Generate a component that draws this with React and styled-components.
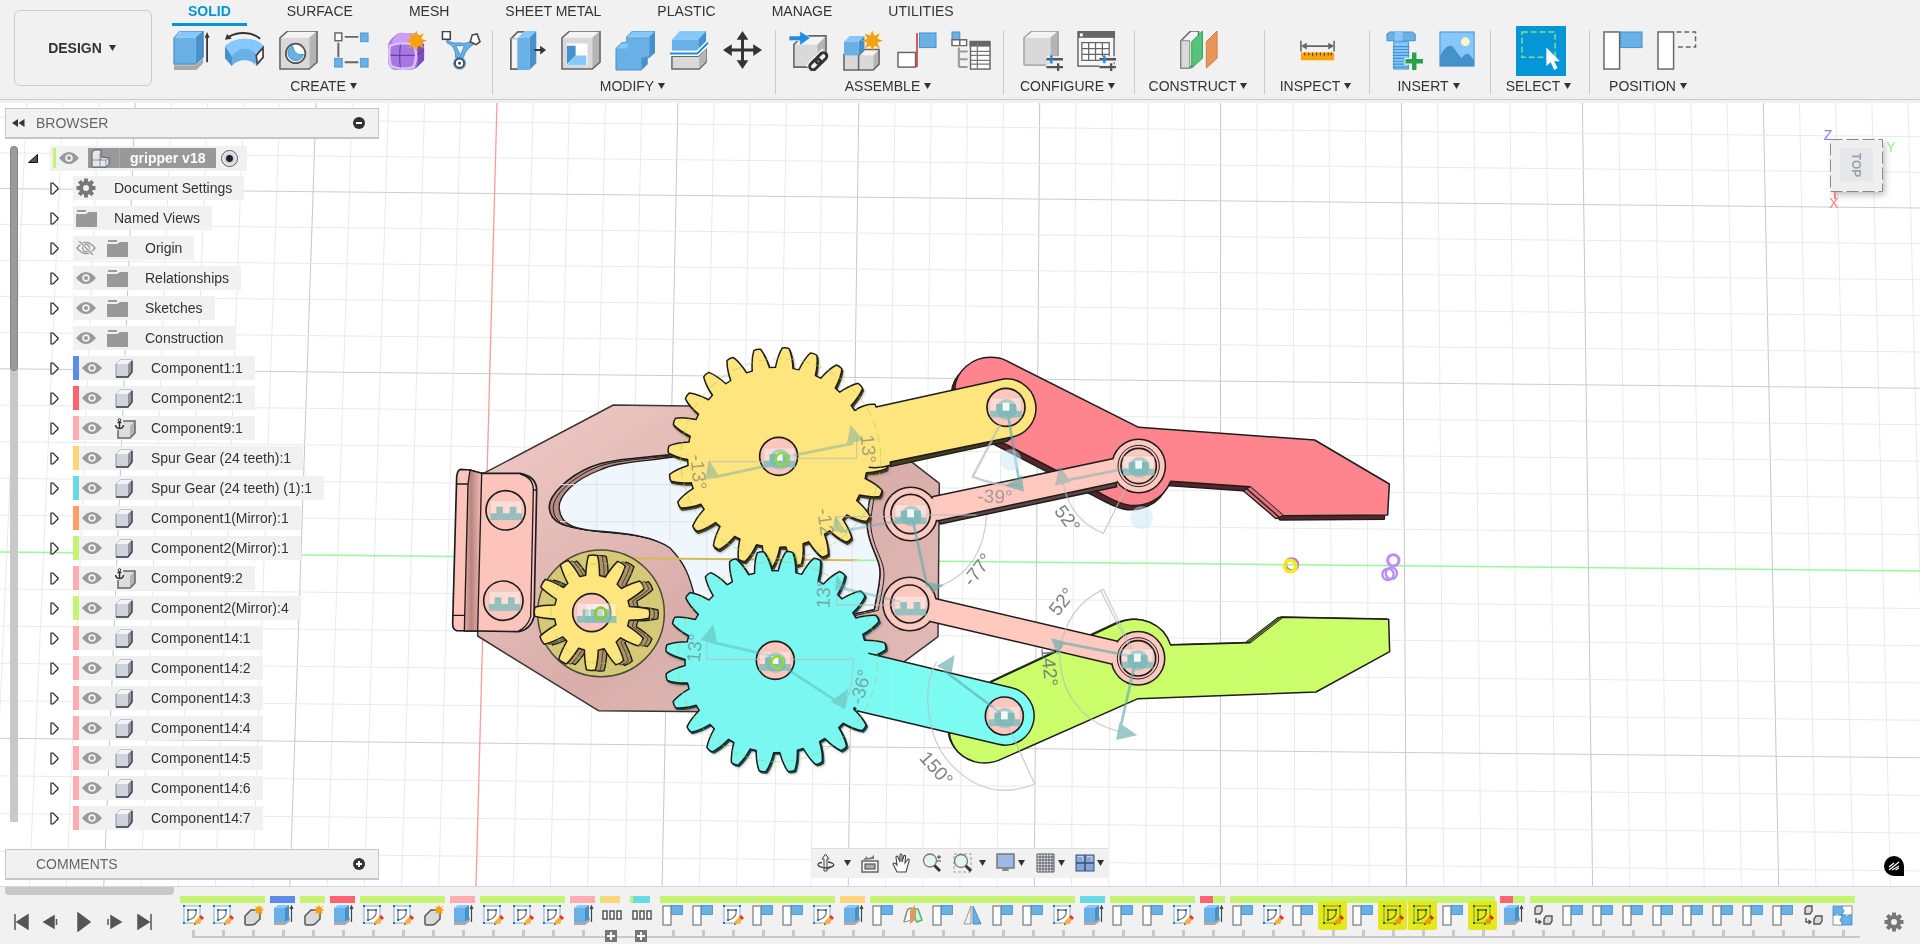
import React from "react";
import styled, { createGlobalStyle } from "styled-components";

const GlobalStyle = createGlobalStyle`
  * { box-sizing: border-box; }
  html, body, #root { height: 100%; }
  body { margin: 0; background: #f1f1f1; font-family: "Liberation Sans", Arial, sans-serif; font-size: 14px; color: #333; }
  button { font: inherit; color: inherit; background: none; border: 0; padding: 0; margin: 0; cursor: pointer; }
  ul { list-style: none; margin: 0; padding: 0; }
  svg { display: block; flex: none; }
`;

/* ---------- page frame ---------- */

const Page = styled.div`
  display: flex;
  flex-direction: column;
  min-height: 100vh;
`;

const Header = styled.header`
  display: flex;
  height: 100px;
  flex: none;
  border-bottom: 1px solid #c9c9c9;
  background: #f1f1f1;
`;

const WorkspaceButton = styled.button`
  display: flex;
  align-items: center;
  justify-content: center;
  gap: 7px;
  width: 138px;
  height: 76px;
  margin: 10px 6px 0 14px;
  padding-right: 2px;
  border: 1px solid #cdcdcd;
  border-radius: 6px;
  font-weight: bold;
`;

const HeaderMain = styled.div`
  display: flex;
  flex-direction: column;
  flex: 1;
  min-width: 0;
`;

const TabBar = styled.nav`
  display: flex;
  gap: 24px;
  padding-left: 14px;
  height: 26px;
`;

const Tab = styled.button`
  height: 26px;
  padding: 0 16px;
  line-height: 23px;
  white-space: nowrap;
  border-bottom: 3px solid ${(p) => (p.$active ? "#0696d7" : "transparent")};
  color: ${(p) => (p.$active ? "#0696d7" : "#333")};
  font-weight: ${(p) => (p.$active ? "bold" : "normal")};
`;

const Ribbon = styled.div`
  display: flex;
`;

const Group = styled.section`
  position: relative;
  display: flex;
  flex-direction: column;
  align-items: center;
  width: ${(p) => p.$w}px;
  flex: none;
  &:not(:last-child)::after {
    content: "";
    position: absolute;
    right: 0;
    top: 4px;
    height: 64px;
    border-right: 1px solid #c9c9c9;
  }
`;

const Tools = styled.div`
  display: flex;
  gap: 4px;
`;

const ToolButton = styled.button`
  display: grid;
  place-items: center;
  width: 50px;
  height: 50px;
  background: ${(p) => (p.$active ? "#0696d7" : "none")};
`;

const GroupLabel = styled.button`
  display: flex;
  align-items: center;
  gap: 4px;
  height: 20px;
  padding-right: 4px;
  white-space: nowrap;
`;

const Viewport = styled.main`
  position: relative;
  flex: 1;
  display: flex;
  margin-top: 3px;
  min-height: 783px;
  background: #fff;
  overflow: hidden;
`;

const Scene = styled.svg`
  position: absolute;
  inset: 0;
  width: 100%;
  height: 100%;
`;

/* ---------- side panels ---------- */

const SidePanel = styled.aside`
  position: relative;
  display: flex;
  flex-direction: column;
  width: 374px;
  margin: 5px 0 6px 5px;
`;

const PanelBar = styled.div`
  display: flex;
  align-items: center;
  height: 31px;
  flex: none;
  padding: 0 13px 0 6px;
  border: 1px solid #c6c6c6;
  border-bottom-width: 2px;
  background: #f1f1f1;
  color: #666;
`;

const BarSlot = styled.button`
  width: 24px;
  height: 20px;
  display: grid;
  align-items: center;
`;

const PanelTitle = styled.h2`
  flex: 1;
  margin: 0;
  font-size: 14px;
  font-weight: normal;
`;

const TreeArea = styled.div`
  display: flex;
  flex: 1;
  padding-left: 5px;
`;

const ScrollTrack = styled.div`
  width: 8px;
  height: 676px;
  margin-top: 7px;
  background: #c8c8c9;
  border-radius: 4px 4px 0 0;
`;

const ScrollThumb = styled.div`
  height: 225px;
  border: 1px solid #858585;
  border-radius: 4px;
  background: #9b9b9b;
`;

const Tree = styled.ul`
  padding: 4px 0 0 32px;
`;

const Row = styled.li`
  display: flex;
  align-items: center;
  height: 30px;
`;

const Twisty = styled.button`
  width: ${(p) => (p.$root ? 22 : 23)}px;
  height: 20px;
  display: grid;
  align-items: center;
  margin-left: ${(p) => (p.$root ? -22 : 0)}px;
`;

const RowBody = styled.div`
  display: flex;
  align-items: center;
  height: ${(p) => (p.$root ? 25 : 24)}px;
  padding: ${(p) => (p.$root ? "0 9px 0 3px" : "0 12px 0 0")};
  background: #f1f1f1;
  white-space: nowrap;
`;

const Swatch = styled.span`
  width: ${(p) => (p.$root ? 3 : 6)}px;
  height: ${(p) => (p.$root ? 20 : 24)}px;
  background: ${(p) => p.$color};
`;

const IconSlot = styled.span`
  display: grid;
  place-items: center start;
  width: ${(p) => p.$w}px;
  padding-left: 3px;
`;

const RootName = styled.span`
  display: flex;
  align-items: center;
  height: 20px;
  margin: 0 5px;
  background: #999;
  color: #fff;
  font-weight: bold;
  span + span { padding: 0 11px 0 10px; line-height: 20px; border-left: 1px solid #a9a9a9; }
`;

const ActiveRadio = styled.input`
  appearance: none;
  width: 17px;
  height: 17px;
  margin: 0;
  border: 1px solid #555;
  border-radius: 50%;
  background: radial-gradient(circle, #222 0 3px, #c9d0da 4px, #f4f6f9 8px);
`;

/* ---------- overlays in the viewport ---------- */

const NavBar = styled.div`
  position: absolute;
  left: 50%;
  bottom: 8px;
  transform: translateX(-50%);
  display: flex;
  align-items: center;
  justify-content: space-between;
  width: 296px;
  height: 30px;
  padding: 0 4px 1px;
  background: #f1f1f1;
  border-top: 1px solid #ddd;
`;

const NavButton = styled.button`
  display: flex;
  align-items: center;
  gap: ${(p) => p.$gap || 2}px;
`;

const Assistant = styled.button`
  position: absolute;
  right: 16px;
  bottom: 10px;
  display: grid;
  place-items: center;
  width: 20px;
  height: 20px;
  border-radius: 10px 10px 0 10px;
  background: #000;
`;

/* ---------- timeline ---------- */

const Footer = styled.footer`
  display: flex;
  flex: none;
  height: 58px;
  position: relative;
  border-top: 1px solid #d6d6d6;
  background: #f1f1f1;
`;

const FooterThumb = styled.div`
  position: absolute;
  left: 5px;
  top: 0;
  width: 169px;
  height: 8px;
  border-radius: 0 0 4px 4px;
  background: #c8c8c8;
`;

const Playback = styled.div`
  display: flex;
  align-items: center;
  width: 180px;
  height: 22px;
  margin-top: 24px;
  padding-left: 5px;
  button { width: 31px; display: grid; place-items: center; }
`;

const Track = styled.ul`
  display: flex;
  flex: 1;
  min-width: 0;
  padding-top: 9px;
`;

const Feature = styled.li`
  position: relative;
  display: flex;
  flex-direction: column;
  width: 30px;
  flex: none;
`;

const FeatureBar = styled.span`
  display: flex;
  width: ${(p) => p.$w}px;
  height: 7px;
  background: ${(p) => p.$color};
`;

const BarLead = styled.span`
  width: ${(p) => p.$w}px;
  background: ${(p) => p.$color};
`;

const FeatureButton = styled.button`
  display: grid;
  place-items: center;
  width: 29px;
  height: 29px;
  margin: -2px 0 0 -2px;
  border-radius: 2px;
  position: relative;
  background: ${(p) => (p.$warn ? "#e6e81f" : "none")};
`;

const FeatureArt = styled.g`
  mix-blend-mode: ${(p) => (p.$warn ? "multiply" : "normal")};
`;

const Tick = styled.span`
  height: 8px;
  border-bottom: 2px solid #c9c9c9;
  margin-left: ${(p) => (p.$first ? 12 : 0)}px;
  width: ${(p) => (p.$first ? 18 : 30)}px;
  &::before {
    content: "";
    display: block;
    width: 3px;
    height: 7px;
    margin-left: ${(p) => (p.$first ? 0 : 12)}px;
    background: #c9c9c9;
  }
`;

const Expand = styled.button`
  position: absolute;
  left: 5px;
  top: 34px;
  width: 12px;
  height: 12px;
`;

const FooterEnd = styled.button`
  width: 53px;
  display: grid;
  place-items: center;
  padding-top: 12px;
`;

/* ---------- icons ---------- */

const F = "#68b0e6", T = "#86c8fc", S = "#4591cb", E = "#3b83bb";
const G = "#d9d9d9", GT = "#f3f3f3", GS = "#b4b4b4", K = "#666";

const Caret = () => (
  <svg width="7" height="6" viewBox="0 0 7 6" aria-hidden="true"><path d="M0 0H7L3.5 6Z" fill="#333" /></svg>
);

const starPoints = (cx, cy, r, r2, n = 8) =>
  Array.from({ length: n * 2 }, (_, i) => {
    const a = (Math.PI * i) / n;
    const q = i % 2 ? r2 : r;
    return `${(cx + q * Math.sin(a)).toFixed(1)},${(cy - q * Math.cos(a)).toFixed(1)}`;
  }).join(" ");
const Star = ({ x, y, r = 10 }) => <polygon points={starPoints(x, y, r, r * 0.5)} fill="#f5a20a" />;

const Block = ({ x, y, w, h, dx = 7, dy = 7, c = [F, T, S], stroke = "none" }) => (
  <g stroke={stroke} strokeWidth="1.5" strokeLinejoin="round">
    <path d={`M${x} ${y + dy}L${x + dx} ${y}H${x + w}L${x + w - dx} ${y + dy}Z`} fill={c[1]} />
    <path d={`M${x + w - dx} ${y + dy}L${x + w} ${y}V${y + h - dy}L${x + w - dx} ${y + h}Z`} fill={c[2]} />
    <path d={`M${x} ${y + dy}H${x + w - dx}V${y + h}H${x}Z`} fill={c[0]} />
  </g>
);
const GREY = [G, GT, GS];
const GreyBlock = ({ x, y, w, h, dx = 7, dy = 7 }) => (
  <g>
    <Block x={x} y={y} w={w} h={h} dx={dx} dy={dy} c={GREY} />
    <path d={`M${x} ${y + dy}L${x + dx} ${y}H${x + w}V${y + h - dy}L${x + w - dx} ${y + h}H${x}Z`} fill="none" stroke={K} strokeWidth="1.6" />
  </g>
);
const Sliders = ({ x, y }) => (
  <g>
    <path d={`M${x} ${y + 4}H${x + 17}M${x} ${y + 12}H${x + 17}M${x + 12} ${y + 8}V${y + 16}`} stroke="#f1f1f1" strokeWidth="6" />
    <path d={`M${x} ${y + 4}H${x + 17}M${x} ${y + 12}H${x + 17}M${x + 12} ${y + 8}V${y + 16}`} stroke="#555" strokeWidth="2.4" />
    <path d={`M${x + 5} ${y}V${y + 8}`} stroke="#1b8fe6" strokeWidth="2.6" />
  </g>
);

const toolIcons = {
  extrude: <g>
    <path d="M3 35H25L33 28V33L26 40H3Z" fill="#a9a9a9" />
    <Block x={3} y={0} w={30} h={34} dx={8} />
    <path d="M3 7L9 0H33V27L25 34H3Z" fill="none" stroke={E} />
    <path d="M37 32V4" stroke="#333" strokeWidth="1.8" /><path d="M34.500 7L37 1L39.500 7Z" fill="#333" />
  </g>,
  revolve: <g>
    <path d="M0 16C9 6 30 5 39 15L33 25L31 35C27 28 13 28 7 36C5 33 1 29 0 26Z" fill={F} />
    <path d="M0 16L7 26V36L0 28Z" fill={S} />
    <path d="M0 16C9 6 30 5 39 15L32 24C26 16 14 16 7 26Z" fill={T} />
    <path d="M39 17V27L33 34L32 25Z" fill="#fff" stroke="#444" strokeWidth="1.8" />
    <path d="M4 6C12 1 27 0 36 8" fill="none" stroke="#333" strokeWidth="2" /><path d="M0 9L2 3L7 8Z" fill="#333" />
  </g>,
  hole: <g><GreyBlock x={1} y={0} w={38} h={39} dx={8} />
    <circle cx="17" cy="23" r="10" fill="#fff" stroke="#555" strokeWidth="1.8" /><path d="M14 15A8 8 0 1 0 25 24C19 25 15 22 14 15Z" fill={F} stroke={S} /></g>,
  pattern: <g>
    <path d="M12 6H26M5.500 12V27M12 32H26" stroke={K} strokeWidth="2" />
    <rect x="2" y="2" width="7" height="8" fill="#fff" stroke={K} strokeWidth="1.5" />
    {[[28, 2], [1.500, 28], [28, 28]].map(([x, y]) => <rect key={x + y * 3} x={x} y={y} width="8" height="9" fill={F} stroke={S} strokeWidth=".8" />)}
  </g>,
  form: <g>
    <path d="M9 4Q12 1 18 2H30Q38 8 38 18V30L30 38Q27 40 20 40H8Q1 38 1 30V16Q1 10 9 4Z" fill="#a878e2" />
    <path d="M9 4Q12 1 18 2H30L28 12H4Z" fill="#c9a0f8" />
    <path d="M31 16L38 13V30L30 38Q33 30 31 16Z" fill="#7d4dbb" />
    <path d="M14 12Q12 26 14 40M1 25H29L38 20" fill="none" stroke="#6b3fa5" strokeWidth="1.2" />
    <path d="M3 15Q12 11 28 14Q32 28 27 37Q14 41 4 36Q1 26 3 15Z" fill="none" stroke="#dcc2fb" strokeWidth="2.500" />
    <Star x={30} y={10} r={11} />
  </g>,
  generative: <g>
    <path d="M6 8C10 12 12 13 18 12C24 13 28 13 32 9L34 13C29 17 25 20 23 27H15C15 20 13 15 6 12Z" fill={F} stroke={S} />
    <path d="M15 15H24L20 25Z" fill="#f1f1f1" stroke={S} />
    <rect x="1.500" y="0.500" width="8" height="8" fill="#fff" stroke="#444" strokeWidth="1.600" />
    <path d="M32 4L37 3L40 11L36 14L30 11Z" fill="#fff" stroke="#444" strokeWidth="1.600" />
    <circle cx="19" cy="33" r="6.500" fill={S} /><circle cx="19" cy="33" r="4.500" fill="#fff" stroke="#444" strokeWidth="1.500" /><circle cx="19" cy="33" r="1.500" fill="#444" />
  </g>,
  presspull: <g>
    <path d="M4 8L11 1H19V33L11 39H4Z" fill={GT} stroke={K} strokeWidth="1.800" />
    <path d="M4 8H11V39" fill="none" stroke={GS} />
    <Block x={11} y={0} w={19} h={40} dx={7} />
    <path d="M28 19.500H35" stroke="#333" strokeWidth="2" /><path d="M34 15L40 19.500L34 24Z" fill="#333" />
  </g>,
  shell: <g><GreyBlock x={1} y={0} w={39} h={39} dx={8} />
    <rect x="6" y="13" width="21" height="22" fill="#fff" stroke="#eee" /><path d="M6 15H15V25L6 34Z" fill={S} /><path d="M15 25H26V35H6Z" fill={T} /></g>,
  combine: <g>
    <Block x={12} y={0} w={29} h={28} dx={6} dy={6} />
    <path d="M1 18L7 12H13V18L20 26H33L27 34V40H1Z" fill={F} /><path d="M1 18L7 12H13V18Z" fill={T} />
    <path d="M27 28L33 26V34L27 40Z" fill={S} /><path d="M1 18L7 12H12V6L18 0H41V22L33 28V34L27 40H1Z" fill="none" stroke={S} />
  </g>,
  split: <g>
    <Block x={3} y={0} w={35} h={20} dx={8} dy={9} />
    <path d="M3 26H30L38 19V32L31 39H3Z" fill={G} stroke={K} strokeWidth="1.500" /><path d="M31 26L38 18V31L31 38Z" fill={GS} />
    <path d="M1 23H29L40 12" fill="none" stroke="#fff" strokeWidth="5" /><path d="M1 23H29L40 12" fill="none" stroke="#1b8fe6" strokeWidth="2" />
  </g>,
  move: <g><path d="M20 6V33M6 19.500H34" stroke="#333" strokeWidth="3" />
    <path d="M20 0L26 9H14ZM20 39L14 30H26ZM0 19.500L9 13.500V25.500ZM40 19.500L31 25.500V13.500Z" fill="#333" /></g>,
  insertComp: <g>
    <GreyBlock x={5} y={5} w={33} h={32} dx={9} dy={9} />
    <path d="M0 5H11V0L22 7L11 15V10H0Z" fill="#1b8fe6" stroke="#f1f1f1" strokeWidth=".8" />
    <g transform="rotate(-45 30 31)" fill="none"><path d="M18 31h24" stroke="#f1f1f1" strokeWidth="13" /><rect x="19" y="27.500" width="13" height="7" rx="3.500" stroke="#333" strokeWidth="3" /><rect x="28" y="27.500" width="13" height="7" rx="3.500" stroke="#333" strokeWidth="3" /></g>
  </g>,
  newComp: <g>
    <GreyBlock x={1} y={19} w={19} h={21} dx={5} dy={5} /><GreyBlock x={16} y={19} w={21} h={21} dx={6} dy={6} />
    <Block x={1} y={5} w={21} h={20} dx={6} dy={6} /><Star x={30} y={10} r={11} />
  </g>,
  joint: <g><rect x="1" y="22" width="18" height="15" fill="#fff" stroke={K} strokeWidth="1.500" /><path d="M20.500 2V37" stroke="#d03030" strokeWidth="1.600" /><rect x="23" y="2" width="17" height="15" fill={F} stroke={S} /></g>,
  table: <g>
    <rect x="1" y="1" width="8" height="8" fill={F} stroke={S} /><path d="M1 9H16V15H1ZM9 9V15" fill="#fff" stroke={K} strokeWidth="1.500" />
    <path d="M8 17V37M8 21H17M8 29H17M8 37H17" stroke="#999" strokeWidth="2" />
    <rect x="20" y="11" width="20" height="28" fill="#fff" stroke={K} strokeWidth="1.500" /><rect x="19" y="10" width="21" height="6" fill={K} />
    <path d="M27 12V39M20 21H40M20 25H40M20 30H40M20 34H40" stroke="#777" strokeWidth="1.300" />
  </g>,
  config: <g><Block x={1} y={0} w={35} h={35} dx={8} c={GREY} /><path d="M1 35V7L9 0H36V28M1 35H24" fill="none" stroke="#999" strokeWidth="1.300" /><Sliders x={24} y={25} /></g>,
  configTable: <g>
    <rect x="1" y="1" width="37" height="35" fill="#f8f8f8" stroke={K} strokeWidth="1.500" /><rect x="1" y="0" width="38" height="7" fill={K} /><rect x="3" y="2.500" width="3" height="3" fill="#fff" />
    <path d="M5 12H33V30H5ZM12 12V30M19 12V30M26 12V30M5 18H33M5 24H33" fill="#fff" stroke={K} strokeWidth="1.300" /><Sliders x={23} y={25} />
  </g>,
  plane: <g><path d="M1 10L11 0H19V28L10 38H1Z" fill={GT} stroke={K} strokeWidth="1.600" /><path d="M1 10H10V38H1Z" fill={G} stroke="#888" />
    <path d="M12 11L23 0V28L12 38Z" fill="#55c37a" stroke="#2fa35a" /><path d="M27 11L38 0V28L27 38Z" fill="#e8965a" stroke="#d07a3c" /></g>,
  measure: <g><path d="M3 10V21M37 10V21M6 15.500H34" stroke={K} strokeWidth="1.600" /><path d="M3 15.500L9 12V19ZM37 15.500L31 12V19Z" fill={K} />
    <rect x="3" y="22" width="34" height="8" fill="#f7a40f" /><path d="M7 22V25M11 22V25M15 22V26M19 22V25M23 22V25M27 22V26M31 22V25M34 22V25" stroke="#6b4700" strokeWidth="1.200" /></g>,
  insertBolt: <g><path d="M3 3L6 1H29L32 3V10H3Z" fill={F} stroke={S} /><path d="M11 1H19V10H11Z" fill={T} /><rect x="10" y="11" width="15" height="28" fill={T} stroke={S} />
    <path d="M9 16H26M9 19H26M9 22H26M9 25H26M9 28H26M9 31H26M9 34H26M9 37H25" stroke={S} strokeWidth="1.200" />
    <path d="M31 21V41M21 31H40" stroke="#f1f1f1" strokeWidth="7" /><path d="M31 22V40M22 31H40" stroke="#26a04c" strokeWidth="4.500" /></g>,
  image: <g><rect x="2" y="1" width="35" height="35" fill={T} stroke={S} /><ellipse cx="28" cy="11" rx="4.500" ry="4.500" fill="#fdf6c6" />
    <path d="M2 26C8 14 14 12 18 20L24 28C27 24 30 22 32 24L37 30V36H2Z" fill={S} /></g>,
  select: <g><rect x="1" y="1" width="34" height="26" fill="none" stroke="#7be58e" strokeWidth="1.500" strokeDasharray="6 3" />
    <path d="M26 17V36L30.500 32L34 40L37.500 38L34 31H40Z" fill="#fff" /></g>,
  position: <g><rect x="1" y="1" width="16" height="38" fill="#fff" stroke={K} strokeWidth="1.500" /><rect x="18" y="1" width="22" height="16" fill={F} stroke={S} /></g>,
  revert: <g><rect x="1" y="1" width="16" height="38" fill="#fff" stroke={K} strokeWidth="1.500" /><path d="M20 1H39.500V16.500H20" fill="none" stroke={K} strokeWidth="1.500" strokeDasharray="5 3" /></g>,
};

const featureIcons = {
  sketch: <g><rect x="2" y="1" width="16" height="17" fill="#fff" stroke="#8fb4d0" strokeWidth="1.100" /><path d="M6 5H14V9Q12 14 6 15Z" fill="none" stroke="#777" strokeWidth="1.300" />
    {[[2, 1], [18, 1], [2, 18], [6, 5], [14, 5], [6, 15]].map(([x, y]) => <rect key={`${x}-${y}`} x={x - 1} y={y - 1} width="2" height="2" fill="#1b76c6" />)}
    <path d="M12 20L13 16L17 12L20 15L16 19Z" fill="#ffb13d" /><path d="M17 12L19 10L22 13L20 15Z" fill="#ee3326" /><path d="M12 20L12.500 18L14 19.500Z" fill="#444" /></g>,
  body: <g><path d="M3 19V11L9 5H18V14L13 19Q11 20 9 20H4Z" fill={G} stroke="#555" strokeWidth="1.500" /><Star x={17} y={5} r={5.500} /></g>,
  extrude: <g><path d="M2 17H13L18 12V16L13 20H2Z" fill="#a9a9a9" /><Block x={2} y={0} w={15} h={17} dx={4} dy={3} /><path d="M19.500 17V2M18 4L19.500 1L21 4" fill="none" stroke="#444" strokeWidth="1.200" /></g>,
  pattern: <g fill="#fff" stroke="#555" strokeWidth="1.500"><rect x="1" y="6" width="4" height="8" /><rect x="8" y="6" width="4" height="8" /><rect x="15" y="6" width="4" height="8" /></g>,
  joint: <g><rect x="1" y="1" width="8" height="19" fill="#fff" stroke="#777" strokeWidth="1.200" /><rect x="9.500" y="0.500" width="11" height="9" fill={F} stroke={S} strokeWidth=".8" /></g>,
  plane: <g><path d="M2 17L6 4L10 3V15Z" fill="#fff" stroke="#8a8a8a" /><path d="M2 17Q4 8 6 4L9 3" fill="none" stroke="#7d9b86" strokeWidth="1.500" /><path d="M13 4H16L20 15L15 17L13 14Z" fill="#d7efdf" stroke="#46b870" strokeWidth="1.500" /><path d="M8 5L13 0V15L8 19Z" fill="#e8965a" /></g>,
  mirror: <g><path d="M9 1V19H2Z" fill="#eee" stroke="#999" /><path d="M11 1L19 19H11Z" fill={F} stroke={S} /></g>,
  copy: <g fill={G} stroke="#555" strokeWidth="1.400"><path d="M3 8V3L5 1H10V6L8 9H3Z" /><path d="M12 19V14L14 11H20V16L18 19H12Z" /><path d="M4 13V17H8M6.500 15L9 17L6.500 19" fill="none" /></g>,
  puzzle: <g strokeWidth=".8"><rect x="1" y="10" width="9" height="10" fill="#fff" stroke="#777" /><rect x="10" y="1" width="10" height="9" fill="#fff" stroke="#777" /><path d="M1 1H10V4A2 2 0 0 1 10 8V10H7A2 2 0 0 0 3 10H1Z" fill={F} stroke={S} /><path d="M10 10H13A2 2 0 0 0 17 10H20V20H10V17A2 2 0 0 1 10 13Z" fill={F} stroke={S} /></g>,
};

const Gear = ({ size = 20, color = "#777" }) => (
  <svg width={size} height={size} viewBox="0 0 20 20" aria-hidden="true">
    {Array.from({ length: 8 }, (_, i) => <rect key={i} x="8" y="0.500" width="4" height="6" rx="0.500" fill={color} transform={`rotate(${i * 45} 10 10)`} />)}
    <circle cx="10" cy="10" r="5" fill="none" stroke={color} strokeWidth="4" />
  </svg>
);
const Eye = ({ off }) => (
  <svg width="20" height="14" viewBox="0 0 20 14" aria-hidden="true">
    {off ? <g fill="none" stroke="#999" strokeWidth="1.300"><path d="M1 7Q10-4 19 7Q10 18 1 7Z" /><circle cx="10" cy="7" r="3.500" /><path d="M3 0L17 14" stroke="#f1f1f1" strokeWidth="3" /><path d="M3 0L17 14" /></g>
      : <g><path d="M0 7Q10-5 20 7Q10 19 0 7Z" fill="#999" /><circle cx="10" cy="7" r="3.800" fill="#f1f1f1" /><circle cx="10" cy="7" r="2" fill="#999" /></g>}
  </svg>
);
const Folder = () => (
  <svg width="21" height="17" viewBox="0 0 21 17" aria-hidden="true"><path d="M0 4H10L13 2H21V17H0Z" fill="#999" /><path d="M1 1H10" stroke="#999" strokeWidth="2" /></svg>
);
const Cube = () => (
  <svg width="18" height="19" viewBox="0 0 18 19" aria-hidden="true">
    <path d="M1 5L5 1H17V13L13 18H1Z" fill="#ced3dc" stroke="#8d929c" /><path d="M1 5L5 1H17L13 5Z" fill="#f4f5f7" /><path d="M13 5L17 1V13L13 18Z" fill="#8e939d" />
    <path d="M1 18H13L17 13V2" fill="none" stroke="#3c4048" strokeWidth="1.300" />
  </svg>
);
const Grounded = () => (
  <svg width="22" height="21" viewBox="0 0 22 21" aria-hidden="true">
    <path d="M3 12V20H15L20 15V3H8V8Z" fill="#dcdcdc" /><path d="M15 8L20 3V15L15 20Z" fill="#b4b4b4" />
    <path d="M3 12V20H15L20 15V3H8" fill="none" stroke={K} strokeWidth="1.500" />
    <path d="M4.500 3V10M2.500 4.500H6.500M0.500 7Q1 10.500 4.500 10.500Q8 10.500 8.500 7" fill="none" stroke="#333" strokeWidth="1.600" /><circle cx="4.500" cy="2" r="1.300" fill="#fff" stroke="#333" />
  </svg>
);
const Assembly = () => (
  <svg width="19" height="19" viewBox="0 0 19 19" aria-hidden="true" stroke="#40444c" strokeWidth=".8">
    <path d="M1 4L3 1H10V8L18 9V15L15 18H1Z" fill="#e3e6eb" /><path d="M9 4V18M1 11H9M9 11L11 8M9 11H15V18M15 11L18 9" fill="none" stroke="#777c87" />
  </svg>
);
const Collapse = ({ plus }) => (
  <svg width="12" height="12" viewBox="0 0 12 12" aria-hidden="true"><circle cx="6" cy="6" r="6" fill="#333" /><path d={plus ? "M3 6H9M6 3V9" : "M3 6H9"} stroke="#fff" strokeWidth="2" /></svg>
);

const navIcons = {
  orbit: <g><path d="M8 18V6H6L9.500 1L13 6H11V18Z" fill="#e9edf2" stroke="#444" /><path d="M12 9C20 10 20 14 10 15C0 14 0 10 6 9.500M12 16L14 13.500" fill="none" stroke="#444" strokeWidth="1.300" /></g>,
  look: <g><rect x="1" y="8" width="16" height="11" fill="#f5f5f5" stroke="#666" strokeWidth="1.500" /><rect x="4" y="11" width="10" height="5" fill="#a8adb5" stroke="#444" /><path d="M2 7L6 3V5Q12 5 13 1V6Z" fill="#777" /></g>,
  pan: <path d="M5 19L1 11Q2 9 4 11L5 12L4 4Q5 2 6 4L8 9V2Q9 0 10 2V9L12 2.500Q14 2 13.500 4L13 10L16 6Q18 6 17 8L14 19Z" fill="#fff" stroke="#444" strokeWidth="1.100" />,
  zoom: <g><path d="M11 11L18 18" stroke="#333" strokeWidth="3" /><circle cx="8" cy="7.500" r="6.500" fill="#e4f3f3" stroke="#777" strokeWidth="1.300" /><path d="M15 4H19M17 2V6M15 8H19" stroke="#444" /></g>,
  fit: <g><rect x="1" y="1" width="17" height="18" fill="none" stroke="#999" strokeDasharray="3 2" /><path d="M12 12L18 18" stroke="#333" strokeWidth="3" /><circle cx="8" cy="8" r="6.500" fill="#e4f3f3" stroke="#777" strokeWidth="1.300" /></g>,
  display: <g><rect x="1" y="1" width="17" height="14" fill="#9db9e4" stroke="#777" strokeWidth="1.500" /><path d="M7 15H12L13 18H6Z" fill="#888" /></g>,
  grid: <g><rect x="1" y="1" width="17" height="18" fill="#eef0f4" /><path d="M1 1H18V19H1ZM4 1V19M7 1V19M10 1V19M13 1V19M16 1V19M1 4H18M1 7H18M1 10H18M1 13H18M1 16H18" fill="none" stroke="#555a63" strokeWidth="1" /></g>,
  views: <g><rect x="1" y="2" width="18" height="16" fill="#89a7d6" stroke="#35507c" /><path d="M10 2V18M1 10H19" stroke="#35507c" strokeWidth="1.500" /><path d="M2.500 3.500H8V8M12 3.500H17V8" fill="none" stroke="#c3d4ee" /></g>,
};

/* ---------- model drawing ---------- */

const polar = (cx, cy, r, deg) => {
  const a = (deg * Math.PI) / 180;
  return `${(cx + r * Math.sin(a)).toFixed(1)} ${(cy - r * Math.cos(a)).toFixed(1)}`;
};

function gearPath(cx, cy, n, root, tip, phase, rootHalf, tipHalf, bulge = 0.66) {
  const mid = root + (tip - root) * 0.62;
  let d = "";
  for (let i = 0; i < n; i++) {
    const a = phase + (360 / n) * i;
    d += `${i ? "L" : "M"}${polar(cx, cy, root, a - rootHalf)}`;
    d += `Q${polar(cx, cy, mid, a - rootHalf * bulge)} ${polar(cx, cy, tip, a - tipHalf)}`;
    d += `Q${polar(cx, cy, tip + 3, a)} ${polar(cx, cy, tip, a + tipHalf)}`;
    d += `Q${polar(cx, cy, mid, a + rootHalf * bulge)} ${polar(cx, cy, root, a + rootHalf)}`;
  }
  return d + "Z";
}

const LINE = "#1d1d1d";

const JointMark = ({ x, y, ring, green }) => (
  <g>
    <rect x={x - 47} y={y - 28} width="94" height="58" fill="#fff" opacity=".4" stroke="#bbb" strokeWidth="2" />
    {ring && <circle cx={x + 2} cy={y + 6} r="31" fill="#6fb9bc" opacity=".55" />}
    <path d={`M${x - 47} ${y + 30}V${y + 10}H${x - 30}V${y - 10}H${x - 10}V${y + 10}H${x + 10}V${y - 10}H${x + 30}V${y + 10}H${x + 47}V${y + 30}Z`} fill="#6fb4b4" opacity=".72" />
    {ring && <rect x={x - 10} y={y - 14} width="20" height="24" fill="#fff" opacity=".85" />}
    {green && <circle cx={x + 7} cy={y + 5} r="18" fill="none" stroke="#93d936" strokeWidth="8" />}
  </g>
);

const Pin = ({ x, y, r = 57, fill = "#fcc6bc" }) => <circle cx={x} cy={y} r={r} fill={fill} stroke={LINE} strokeWidth="5" />;

const linkEnds = [[1412, 522, 59], [2096, 378, 53], [1409, 792, 57], [2094, 955, 53]];

const Arrow = ({ from, to, head, faint }) => (
  <g opacity={faint ? 0.42 : 0.62} fill="#5fa9a8">
    <path d={`M${from}L${to}`} stroke="#5fa9ac" strokeWidth="8" />
    <path d={head} />
  </g>
);

const angleLabels = [
  ["-13°", 698, 472, 85], ["13°", 868, 449, 85], ["-12", 825, 522, 82], ["13°", 824, 594, -88],
  ["13°", 695, 648, -85], ["-36°", 861, 687, -75], ["-39°", 995, 497, 2], ["52°", 1067, 519, 53],
  ["-77°", 978, 570, -52], ["52°", 1062, 602, -52], ["142°", 1049, 667, 84], ["150°", 936, 769, 48],
];

const gridLines = () => {
  const out = [];
  for (let i = -22; i <= 46; i++) {
    if (i === 0) continue;
    const major = i % 5 === 0;
    out.push(<path key={`v${i}`} d={`M${497 + 36.18 * i} 103L${476 + 37.22 * i} 886`} stroke={major ? "#c6c6c6" : "#eaeaea"} />);
  }
  for (let m = -12; m <= 9; m++) {
    if (m === 0) continue;
    const y = 552 + 36.95 * m + 0.06 * m * m;
    out.push(<path key={`h${m}`} d={`M0 ${y}L1920 ${y + 19.5}`} stroke={m % 5 === 0 ? "#cdcdcd" : "#eaeaea"} />);
  }
  return out;
};

const plate = "M520 195L1150 203L1410 362L1498 430L1494 890L1397 962L1150 1118L475 1112L113 888V400L135 398Z";
const hole = "M700 343C600 354 500 358 450 382C385 410 325 465 328 503C330 560 400 563 470 573C560 580 640 588 700 627C755 670 768 710 778 775L900 900L1303 808C1310 760 1326 715 1318 680C1310 640 1270 590 1283 515L1290 470L1150 300Z";
const holeInner = "M720 348C600 366 530 366 480 390C400 420 352 470 358 508C362 560 420 568 470 573C560 580 640 588 690 624C735 670 750 710 765 775L900 900L1303 808C1310 760 1326 715 1318 680C1310 640 1270 590 1283 515L1290 470L1150 300Z";
const redFinger = "M1544 145C1548 90 1600 52 1651 52Q1680 52 1699 62L2096 262L2624 300L2848 432L2843 525L2530 527L2430 440L2192 424C2170 480 2110 505 2060 494C2020 486 1990 462 1956 447L1672 300Z";
const greenFinger = "M1656 1025L2031 850C2100 820 2170 850 2192 915L2430 908L2527 832L2846 838L2849 935L2628 1056L2094 1076L1689 1255C1640 1280 1590 1270 1556 1238C1535 1215 1530 1200 1528 1180Z";
const yellowArm = "M1250 207Q1280 190 1305 193L1308 201L1680 119A86 86 0 0 1 1720 290L1351 366V376Q1320 386 1286 382";
const cyanArm = "M1285 940L1715 1043A86 86 0 0 1 1675 1213L1250 1112";
const upperLink = "M1480 472L2025 357L2050 395L2029 425L1494 540L1450 530Z";
const lowerLink = "M1485 778L2029 905L2050 940L2015 970L1471 842L1440 810Z";
const yellowGear = gearPath(1013, 352, 24, 270, 328, 4.2, 5.6, 1.8, 0.74);
const cyanGear = gearPath(1008, 965, 24, 273, 331, 7, 5.6, 1.8, 0.74);
const pinion = gearPath(456, 818, 12, 114, 172, 1, 10.5, 4.5, 0.72);

const Model = () => (
  <g transform="translate(440 340) scale(.333333)" strokeLinejoin="round">
    <path d={plate} fill="url(#plateFill)" stroke="#3a3434" strokeWidth="4.500" />
    <path d={hole} fill="#b98c86" stroke={LINE} strokeWidth="5" />
    <path d={hole} fill="none" stroke={LINE} strokeWidth="3" transform="translate(12 3)" />
    <path d={holeInner} fill="#eff7fd" stroke={LINE} strokeWidth="4" />
    <path d="M360 434H730M360 545H760M470 400V570M580 375V580M690 360V600M800 700V560M1237 560V800" stroke="#dde5ea" strokeWidth="3" />
    <path d="M500 654L1255 661" stroke="#d3bd52" strokeWidth="6" /><path d="M1240 661H1306" stroke="#9cf5a0" strokeWidth="5" />

    <path d="M62 388L90 390L125 400H240Q290 410 290 450L282 830Q272 870 235 875L50 872Q38 870 38 850L50 410Q52 390 62 388Z" fill="#fdc4bc" stroke={LINE} strokeWidth="5" />
    <path d="M90 390L125 400L113 873H73L84 432Z" fill="url(#bend)" stroke={LINE} strokeWidth="4" />
    <path d="M50 432H84M38 826H74M240 402Q280 412 280 450L272 830Q262 862 235 873M280 450H290" fill="none" stroke={LINE} strokeWidth="4" />
    <Pin x={197} y={511} r={59} /><JointMark x={199} y={510} />
    <Pin x={190} y={782} r={59} /><JointMark x={194} y={782} />

    <circle cx="483" cy="820" r="190" fill="#d5c877" stroke="#4b4a35" strokeWidth="4.500" />
    <path d={pinion} fill="#a98f62" stroke={LINE} strokeWidth="4" transform="translate(26 2)" />
    <path d={pinion} fill="#ad9365" stroke={LINE} strokeWidth="2" transform="translate(14 1)" />
    <path d={pinion} fill="#ffe57d" stroke={LINE} strokeWidth="4.500" />
    <Pin x={455} y={818} /><JointMark x={458} y={818} /><JointMark x={482} y={818} />
    <circle cx="482" cy="820" r="17" fill="none" stroke="#93c936" strokeWidth="8" />

    <path d={redFinger} fill="#54262a" stroke={LINE} strokeWidth="4" transform="translate(-10 13)" />
    <path d={redFinger} fill="#fe858d" stroke={LINE} strokeWidth="4.500" />
    <path d="M2430 440L2410 452L2508 536L2530 527M2420 446L2518 532" fill="#e0717a" stroke={LINE} strokeWidth="4" />
    <path d={greenFinger} fill="#30361d" transform="translate(-5 -3)" />
    <path d={greenFinger} fill="#ccfe6c" stroke={LINE} strokeWidth="4.500" />
    <path d="M2430 908L2418 906L2514 832L2527 832M2424 908L2520 832" fill="#7b9a42" stroke={LINE} strokeWidth="3" />

    <path d="M1480 500L1501 552L2030 440L2020 400Z" fill="#5b4743" stroke={LINE} strokeWidth="4.500" />
    <g stroke={LINE} strokeWidth="9">
      <path d={upperLink} /><path d={lowerLink} />
      {linkEnds.map(([x, y]) => <circle key={x * 2 + y} cx={x} cy={y} r="78" />)}
    </g>
    <g fill="#ffc9c0">
      <path d={upperLink} /><path d={lowerLink} />
      {linkEnds.map(([x, y]) => <circle key={x * 2 + y} cx={x} cy={y} r="78" />)}
    </g>
    {linkEnds.map(([x, y, r]) => (
      <g key={x * 2 + y} stroke={LINE}>
        {r === 53 && <circle cx={x} cy={y} r="62" fill="#fcc3ba" strokeWidth="3" />}
        <circle cx={x} cy={y} r={r} fill="#fdc8be" strokeWidth="5" />
      </g>
    ))}

    <path d={yellowGear} fill="#463b1d" stroke="#463b1d" strokeWidth="4" transform="translate(3 6)" filter="url(#soft)" />
    <path d="M1351 380L1700 304L1720 290L1351 366Z" fill="#463b1d" stroke={LINE} strokeWidth="4" />
    <path d={yellowGear} fill="#ffe57d" stroke={LINE} strokeWidth="4.500" />
    <path d={yellowArm} fill="#ffe57d" stroke={LINE} strokeWidth="4.500" />
    <path d="M1220 240L1254 212L1306 206L1346 300V370L1290 376L1240 370Z" fill="#ffe57d" />
    <circle cx="1013" cy="352" r="267" fill="#ffe57d" />
    <path d={cyanGear} fill="#17504f" stroke="#17504f" strokeWidth="4" transform="translate(4 4)" filter="url(#soft)" />
    <path d={cyanGear} fill="#79f7f0" stroke={LINE} strokeWidth="4.500" />
    <path d={cyanArm} fill="#7dfcf4" stroke={LINE} strokeWidth="4.500" />
    <path d="M1230 950L1286 944L1350 960V1131L1253 1108L1220 1080Z" fill="#7bf9f2" />
    <circle cx="1008" cy="965" r="270" fill="#79f7f0" />
    <g fill="none" stroke="#a6cf55" strokeWidth="3" strokeDasharray="28 14" opacity=".55"><circle cx="1022" cy="356" r="300" /><circle cx="1012" cy="965" r="300" /><circle cx="483" cy="820" r="150" /></g>

    <Pin x={1016} y={349} /><Pin x={1006} y={961} /><Pin x={1698} y={202} /><Pin x={1693} y={1128} />

    <g fill="none" stroke="#b9bdbd" strokeWidth="4" opacity=".7">
      <path d="M805 365H1040M805 365V400M1016 355H1250V290" /><path d="M800 958H1240Q1240 1030 1215 1100M800 958V900" />
      <path d="M1190 530H1412M1190 530V560M1190 795H1409M1190 795V750" />
      <path d="M1680 255L1598 410Q1670 440 1740 435" strokeWidth="7" /><path d="M1640 525Q1630 690 1496 740" />
      <path d="M1870 430Q1890 540 1990 580L2060 440" /><path d="M1990 748L2090 955M1980 748L2080 945M1990 748Q1880 800 1860 930C1855 1060 1930 1150 2040 1175" />
      <path d="M1490 965C1440 1050 1465 1200 1530 1270Q1640 1390 1784 1332L1705 1160" />
      <path d="M1412 525H1610" />
    </g>
    <Arrow faint from="1016 355" to="1240 310" head="M1232 255L1270 300L1220 312Z" />
    <Arrow faint from="1016 370" to="820 412" head="M808 362L838 408L795 420Z" />
    <Arrow faint from="1412 535" to="1200 575" head="M1185 525L1222 580L1178 572Z" />
    <Arrow from="1418 540" to="1462 740" head="M1455 725L1512 735L1478 760Z" />
    <Arrow faint from="1006 950" to="810 905" head="M820 853L832 912L782 900Z" />
    <Arrow faint from="1030 980" to="1200 1090" head="M1225 1045L1215 1108L1172 1085Z" />
    <Arrow faint from="1380 785" to="1210 745" head="M1190 705L1225 750L1185 750Z" />
    <Arrow from="1705 230" to="1740 440" head="M1695 438L1745 405L1752 455Z" />
    <Arrow faint from="2060 385" to="1860 425" head="M1858 375L1892 425L1845 438Z" />
    <Arrow from="2080 950" to="1850 905" head="M1833 895L1875 905L1852 945Z" />
    <Arrow from="1693 1128" to="1510 990" head="M1544 945L1535 1000L1490 978Z" />
    <Arrow from="2085 970" to="2042 1160" head="M2038 1148L2092 1186L2028 1200Z" />

    <JointMark x={1018} y={352} ring green /><JointMark x={1005} y={962} ring green />
    <JointMark x={1412} y={522} ring /><JointMark x={1411} y={796} />
    <JointMark x={1698} y={202} ring /><JointMark x={2096} y={376} ring />
    <JointMark x={1693} y={1128} ring /><JointMark x={2092} y={955} ring />
    <circle cx="1712" cy="360" r="32" fill="#c9e6f4" opacity=".5" /><circle cx="2105" cy="533" r="34" fill="#c9e6f4" opacity=".5" />
    <g fill="none" strokeWidth="9"><circle cx="2555" cy="674" r="18" stroke="#a678ea" /><circle cx="2551" cy="678" r="17" stroke="#f7ea17" strokeWidth="11" /><circle cx="2860" cy="661" r="17" stroke="#b98ff0" /><circle cx="2844" cy="703" r="17" stroke="#b98ff0" strokeWidth="7" /><circle cx="2854" cy="700" r="17" stroke="#b98ff0" strokeWidth="7" /></g>
  </g>
);

const ViewCube = () => (
  <g>
    <rect x="1831" y="140" width="52" height="52" fill="#ededee" filter="url(#soft)" />
    <rect x="1830.500" y="139.500" width="52" height="52" fill="#efefef" stroke="#8a8a8a" strokeDasharray="12 4" />
    <rect x="1840" y="148" width="33" height="33" fill="#e6e7ea" />
    <text x="1856" y="169" textAnchor="middle" transform="rotate(90 1856 165)" fontSize="12" fontWeight="bold" fill="#9da0a8">TOP</text>
    <path d="M1835 192V199" stroke="#ff8080" strokeWidth="2" />
    <g fontSize="14" textAnchor="middle"><text x="1828" y="140" fill="#7f7fff">Z</text><text x="1891" y="152" fill="#80ff80">Y</text><text x="1834" y="208" fill="#ff7f7f">X</text></g>
  </g>
);

/* ---------- data ---------- */

const ribbon = [
  ["CREATE", 335, ["extrude", "revolve", "hole", "pattern", "form", "generative"]],
  ["MODIFY", 283, ["presspull", "shell", "combine", "split", "move"]],
  ["ASSEMBLE", 228, ["insertComp", "newComp", "joint", "table"]],
  ["CONFIGURE", 131, ["config", "configTable"]],
  ["CONSTRUCT", 130, ["plane"]],
  ["INSPECT", 105, ["measure"]],
  ["INSERT", 121, ["insertBolt", "image"]],
  ["SELECT", 99, ["select"]],
  ["POSITION", 120, ["position", "revert"]],
];

const C = { green: "#c5f470", blue: "#5d8bec", red: "#ff6370", pink: "#ffadb0", yellow: "#ffd579", cyan: "#66dce2", orange: "#ff9d66" };

const rows = [
  { name: "Document Settings", kind: "settings" },
  { name: "Named Views", kind: "folder" },
  { name: "Origin", kind: "folder", eye: "off" },
  { name: "Relationships", kind: "folder", eye: "on" },
  { name: "Sketches", kind: "folder", eye: "on" },
  { name: "Construction", kind: "folder", eye: "on" },
  ...[
    ["Component1:1", "blue"], ["Component2:1", "red"], ["Component9:1", "pink", true],
    ["Spur Gear (24 teeth):1", "yellow"], ["Spur Gear (24 teeth) (1):1", "cyan"],
    ["Component1(Mirror):1", "orange"], ["Component2(Mirror):1", "green"], ["Component9:2", "pink", true],
    ["Component2(Mirror):4", "green"], ["Component14:1", "pink"], ["Component14:2", "pink"], ["Component14:3", "pink"],
    ["Component14:4", "pink"], ["Component14:5", "pink"], ["Component14:6", "pink"], ["Component14:7", "pink"],
  ].map(([name, color, grounded]) => ({ name, color, kind: grounded ? "grounded" : "cube", eye: "on" })),
];

const kinds = { s: "sketch", b: "body", e: "extrude", p: "pattern", j: "joint", l: "plane", m: "mirror", c: "copy", z: "puzzle", w: "sketch" };
const sequence = "ssbebessbessseppjjsjjsejljmjjsejjsejsjwjwwjwecjjjjjjjjcz";
const barStyle = { 3: "blue", 5: "red", 9: "pink", 13: "pink", 14: "yellow", 15: "cyan", 22: "yellow", 30: "cyan", 34: "red", 44: "red" };
const leads = { 14: 3, 15: 3 };
const splits = [34, 44];
const breaksAfter = new Set([2, 3, 4, 5, 8, 9, 12, 13, 21, 22, 29, 30, 33, 34, 43, 44, 55]);
const features = [...sequence].map((k, i) => ({
  kind: kinds[k],
  warn: k === "w",
  color: C[barStyle[i] || "green"],
  lead: leads[i],
  split: splits.includes(i),
  width: i === 14 || i === 15 ? 20 : breaksAfter.has(i) ? 25 : 30,
}));

const nav = [["orbit", true, 8], ["look"], ["pan"], ["zoom"], ["fit", true, 6], ["display", true], ["grid", true], ["views", true]];

const play = [
  ["Go to start", "M4 2V18M17 3L6 10L17 17Z"],
  ["Step back", "M12 4L2 10L12 16ZM14.500 7V13"],
  ["Play", "M5 1L17 10L5 19Z"],
  ["Step forward", "M7 4L17 10L7 16ZM4 7V13"],
  ["Go to end", "M16 2V18M3 3L14 10L3 17Z"],
];

/* ---------- parts ---------- */

const TreeRow = ({ row }) => (
  <Row>
    <Twisty aria-label={`Expand ${row.name}`}>
      <svg width="9" height="13" viewBox="0 0 9 13"><path d="M1 1V12H3L8 7V6L3 1Z" fill="#fff" stroke="#222" strokeWidth="1.200" /></svg>
    </Twisty>
    <RowBody>
      {row.color && <Swatch $color={C[row.color]} />}
      {row.eye && <IconSlot $w={row.color ? 33 : 31}><Eye off={row.eye === "off"} /></IconSlot>}
      <IconSlot $w={row.color ? 39 : 41}>
        {row.kind === "settings" && <Gear size={20} />}
        {row.kind === "folder" && <Folder />}
        {row.kind === "cube" && <Cube />}
        {row.kind === "grounded" && <Grounded />}
      </IconSlot>
      {row.name}
    </RowBody>
  </Row>
);

export default function App() {
  return (
    <Page>
      <GlobalStyle />
      <Header>
        <WorkspaceButton>DESIGN <Caret /></WorkspaceButton>
        <HeaderMain>
          <TabBar>
            {["SOLID", "SURFACE", "MESH", "SHEET METAL", "PLASTIC", "MANAGE", "UTILITIES"].map((t, i) => (
              <Tab key={t} $active={i === 0}>{t}</Tab>
            ))}
          </TabBar>
          <Ribbon>
            {ribbon.map(([label, w, tools]) => (
              <Group key={label} $w={w}>
                <Tools>
                  {tools.map((t) => (
                    <ToolButton key={t} aria-label={t} $active={t === "select"}>
                      <svg width="40" height="40" viewBox="0 0 41 41">{toolIcons[t]}</svg>
                    </ToolButton>
                  ))}
                </Tools>
                <GroupLabel>{label}<Caret /></GroupLabel>
              </Group>
            ))}
          </Ribbon>
        </HeaderMain>
      </Header>

      <Viewport>
        <Scene viewBox="0 103 1920 783" preserveAspectRatio="xMidYMid slice" role="img" aria-label="Gripper assembly">
          <defs>
            <linearGradient id="plateFill" x1="0" y1="0" x2="1" y2="1"><stop offset="0" stopColor="#f0cbc7" /><stop offset=".55" stopColor="#d9aeaa" /><stop offset="1" stopColor="#e2bdb8" /></linearGradient>
            <linearGradient id="bend"><stop offset="0" stopColor="#e5a8a1" /><stop offset=".4" stopColor="#b98480" /><stop offset="1" stopColor="#f6bfb7" /></linearGradient>
            <filter id="soft" x="-20%" y="-20%" width="140%" height="140%"><feDropShadow dx="2" dy="3" stdDeviation="3" floodOpacity=".25" /></filter>
          </defs>
          {gridLines()}
          <path d="M497 103L476 886" stroke="#ff9a9a" strokeWidth="1.300" />
          <path d="M0 552L1920 571" stroke="#97fb98" strokeWidth="1.500" />
          <Model />
          <g fontSize="19" fill="#6f7474" textAnchor="middle">
            {angleLabels.map(([t, x, y, r], i) => (
              <text key={i} x={x} y={y + 6} transform={`rotate(${r} ${x} ${y})`} opacity={i < 7 ? 0.6 : 0.9}>{t}</text>
            ))}
          </g>
          <ViewCube />
        </Scene>

        <SidePanel>
          <PanelBar>
            <BarSlot aria-label="Collapse browser"><svg width="13" height="8" viewBox="0 0 13 8"><path d="M6 0V8L0 4ZM12.500 0V8L6.500 4Z" fill="#333" /></svg></BarSlot>
            <PanelTitle>BROWSER</PanelTitle>
            <Collapse />
          </PanelBar>
          <TreeArea>
            <ScrollTrack><ScrollThumb /></ScrollTrack>
            <Tree>
              <Row>
                <Twisty $root aria-label="Collapse gripper v18"><svg width="10" height="9" viewBox="0 0 10 9"><path d="M9.500 0.500V8.500H0.500Z" fill="#555" stroke="#111" /></svg></Twisty>
                <RowBody $root>
                  <Swatch $root $color={C.green} />
                  <IconSlot $w={27}><Eye /></IconSlot>
                  <RootName><IconSlot $w={31}><Assembly /></IconSlot><span>gripper v18</span></RootName>
                  <ActiveRadio type="radio" defaultChecked aria-label="Activate gripper v18" />
                </RowBody>
              </Row>
              {rows.map((r) => <TreeRow key={r.name} row={r} />)}
            </Tree>
          </TreeArea>
          <PanelBar>
            <BarSlot as="span" />
            <PanelTitle>COMMENTS</PanelTitle>
            <Collapse plus />
          </PanelBar>
        </SidePanel>

        <NavBar>
          {nav.map(([id, caret, gap]) => (
            <NavButton key={id} aria-label={id} $gap={gap}>
              <svg width="20" height="20" viewBox="0 0 20 20">{navIcons[id]}</svg>
              {caret && <Caret />}
            </NavButton>
          ))}
        </NavBar>
        <Assistant aria-label="Assistant">
          <svg width="12" height="10" viewBox="0 0 12 10"><path d="M1 9L11 1M4 9L11 5M7.500 9L11 7M1 6L6 2" stroke="#fff" strokeWidth="1.300" /></svg>
        </Assistant>
      </Viewport>

      <Footer>
        <FooterThumb />
        <Playback>
          {play.map(([label, d]) => (
            <button key={label} aria-label={label}><svg width="20" height="20" viewBox="0 0 20 20"><path d={d} fill="#555" stroke="#555" strokeWidth="1.500" /></svg></button>
          ))}
        </Playback>
        <Track>
          {features.map((f, i) => (
            <Feature key={i}>
              <FeatureBar $w={f.width} $color={f.split ? C.green : f.color}>
                {f.lead && <BarLead $w={f.lead} $color={C.green} />}
                {f.split && <BarLead $w={13} $color={f.color} />}
              </FeatureBar>
              <FeatureButton $warn={f.warn} aria-label={`${f.kind} ${i + 1}`}>
                <svg width="22" height="21" viewBox="0 0 22 21"><FeatureArt $warn={f.warn}>{featureIcons[f.kind]}</FeatureArt></svg>
              </FeatureButton>
              <Tick $first={i === 0} />
              {f.kind === "pattern" && (
                <Expand aria-label="Expand group"><svg width="12" height="12" viewBox="0 0 12 12"><rect width="12" height="12" fill="#777" /><path d="M2 6H10M6 2V10" stroke="#fff" strokeWidth="2" /></svg></Expand>
              )}
            </Feature>
          ))}
        </Track>
        <FooterEnd aria-label="Timeline settings"><Gear size={20} /></FooterEnd>
      </Footer>
    </Page>
  );
}
